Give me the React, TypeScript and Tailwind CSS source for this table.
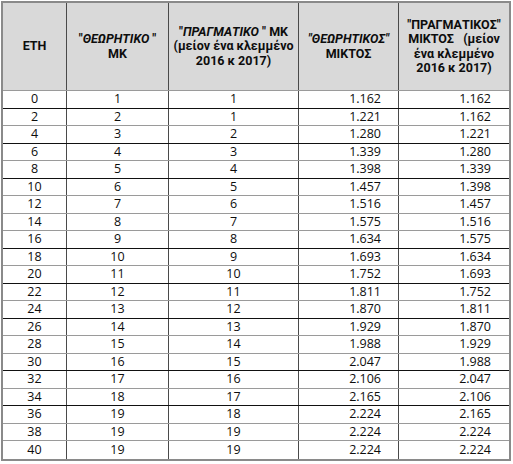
import React from 'react';

const ROWS: [number, number, number, string, string][] = [
  [0, 1, 1, '1.162', '1.162'],
  [2, 2, 1, '1.221', '1.162'],
  [4, 3, 2, '1.280', '1.221'],
  [6, 4, 3, '1.339', '1.280'],
  [8, 5, 4, '1.398', '1.339'],
  [10, 6, 5, '1.457', '1.398'],
  [12, 7, 6, '1.516', '1.457'],
  [14, 8, 7, '1.575', '1.516'],
  [16, 9, 8, '1.634', '1.575'],
  [18, 10, 9, '1.693', '1.634'],
  [20, 11, 10, '1.752', '1.693'],
  [22, 12, 11, '1.811', '1.752'],
  [24, 13, 12, '1.870', '1.811'],
  [26, 14, 13, '1.929', '1.870'],
  [28, 15, 14, '1.988', '1.929'],
  [30, 16, 15, '2.047', '1.988'],
  [32, 17, 16, '2.106', '2.047'],
  [34, 18, 17, '2.165', '2.106'],
  [36, 19, 18, '2.224', '2.165'],
  [38, 19, 19, '2.224', '2.224'],
  [40, 19, 19, '2.224', '2.224'],
];

// rows whose bottom rule comes out dark in the scaled screenshot
const DARK = [0, 2, 4, 8, 10, 12, 15, 17];

function HeaderCell({ children, last }: { children: React.ReactNode; last?: boolean }) {
  return (
    <div
      className={
        'flex items-center justify-center text-center font-bold leading-[14.5px] whitespace-nowrap ' +
        (last ? '' : 'border-r border-[#4a4a4a]')
      }
    >
      {children}
    </div>
  );
}

export default function App() {
  return (
    <div
      className="bg-white w-[513px] h-[464px] pt-px pl-px text-[#0d0d0d] text-[12.5px]"
      style={{ fontFamily: '"Open Sans", "Noto Sans", sans-serif' }}
    >
      <div className="w-[510px] border-2 border-[#8a8a8a]">
        <div
          className="grid grid-cols-[64px_102px_130px_100px_110px] h-[88px] bg-[#d9d9d9] border-b border-[#9a9a9a] text-[12.5px]"
          style={{ fontFamily: 'Roboto, "Liberation Sans", sans-serif' }}
        >
          <HeaderCell>ΕΤΗ</HeaderCell>
          <HeaderCell>
            <div>
              "<i>ΘΕΩΡΗΤΙΚΟ</i> "
              <br />
              ΜΚ
            </div>
          </HeaderCell>
          <HeaderCell>
            <div>
              "<i>ΠΡΑΓΜΑΤΙΚΟ</i> " ΜΚ
              <br />
              (μείον ένα κλεμμένο
              <br />
              2016 κ 2017)
            </div>
          </HeaderCell>
          <HeaderCell>
            <div>
              <i>"ΘΕΩΡΗΤΙΚΟΣ"</i>
              <br />
              ΜΙΚΤΟΣ
            </div>
          </HeaderCell>
          <HeaderCell last>
            <div>
              "ΠΡΑΓΜΑΤΙΚΟΣ"
              <br />
              ΜΙΚΤΟΣ&nbsp;&nbsp;&nbsp;(μείον
              <br />
              ένα κλεμμένο
              <br />
              2016 κ 2017)
            </div>
          </HeaderCell>
        </div>
        {ROWS.map((r, i) => (
          <div
            key={r[0]}
            className={
              'grid grid-cols-[64px_102px_130px_100px_110px] h-[17.5px] leading-none ' +
              (i === ROWS.length - 1
                ? ''
                : DARK.includes(i)
                  ? 'border-b border-[#111]'
                  : 'border-b border-[#9a9a9a]')
            }
          >
            <div className="flex items-center justify-center border-r border-[#4a4a4a]">{r[0]}</div>
            <div className="flex items-center justify-center border-r border-[#4a4a4a]">{r[1]}</div>
            <div className="flex items-center justify-center border-r border-[#4a4a4a]">{r[2]}</div>
            <div className="flex items-center justify-end pr-[17px] border-r border-[#4a4a4a]">{r[3]}</div>
            <div className="flex items-center justify-end pr-[18px]">{r[4]}</div>
          </div>
        ))}
      </div>
    </div>
  );
}
